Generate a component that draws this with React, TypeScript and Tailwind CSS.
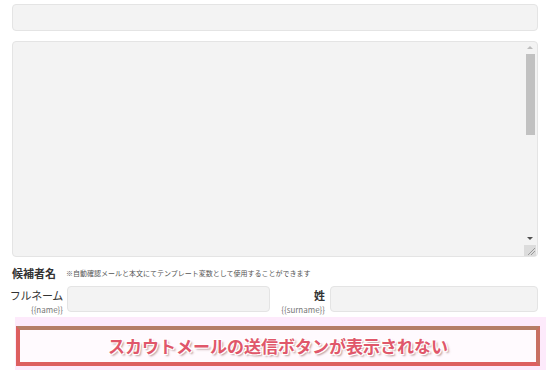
export default function App() {
  const font = { fontFamily: '"Noto Sans CJK JP", "Noto Sans", sans-serif' };
  return (
    <div className="w-[550px] h-[380px] bg-white overflow-hidden relative" style={font}>
      <div className="px-3 pt-1">
        <div className="h-[27px] rounded border border-[#e4e4e4] bg-[#f3f3f3]" />
        <div className="mt-[10px] h-[216px] rounded-sm border border-[#e4e4e4] bg-[#f3f3f3] flex justify-end">
          <div className="w-[12px] mr-[1px] flex flex-col items-center pt-[4px]">
            <div className="w-0 h-0 border-l-[3px] border-r-[3px] border-b-[3px] border-l-transparent border-r-transparent border-b-[#bdbdbd]" />
            <div className="mt-[5px] w-[9px] h-[81px] bg-[#c1c1c1]" />
            <div className="flex-1" />
            <div className="w-0 h-0 border-l-[3px] border-r-[3px] border-t-[3px] border-l-transparent border-r-transparent border-t-[#505050]" />
            <div className="mt-[5px] w-[12px] h-[11px] bg-[#dcdcdc] relative">
              <svg className="absolute inset-0" width="12" height="11" viewBox="0 0 12 11">
                <path d="M4 10 L11 3 M7 10 L11 6" stroke="#999" strokeWidth="1" />
              </svg>
            </div>
          </div>
        </div>
        <div className="mt-[8px] flex items-center gap-[10px]">
          <span className="text-[11px] font-bold text-[#333]">候補者名</span>
          <span className="text-[7px] text-[#555]">※自動確認メールと本文にてテンプレート変数として使用することができます</span>
        </div>
        <div className="mt-[4px] flex items-start">
          <div className="w-[51px] shrink-0 flex flex-col items-end pt-[2px]">
            <span className="text-[11px] leading-[14px] text-[#333] whitespace-nowrap tracking-[-0.3px]">フルネーム</span>
            <span className="text-[8px] leading-[12px] text-[#777] mt-[2px] whitespace-nowrap">{"{{name}}"}</span>
          </div>
          <div className="ml-[4px] w-[203px] shrink-0 h-[26px] rounded border border-[#e4e4e4] bg-[#f3f3f3]" />
          <div className="ml-[8px] w-[47px] shrink-0 flex flex-col items-end pt-[2px]">
            <span className="text-[11px] leading-[14px] text-[#333] font-bold">姓</span>
            <span className="text-[8px] leading-[12px] text-[#777] mt-[2px] whitespace-nowrap">{"{{surname}}"}</span>
          </div>
          <div className="ml-[5px] flex-1 h-[26px] rounded border border-[#e4e4e4] bg-[#f3f3f3]" />
        </div>
      </div>
      <div className="absolute left-[15px] w-[531px] top-[317px] h-[53px] bg-[#fdeafb] pl-[1px] pt-[9px]">
        <div className="w-[524px] h-[40px] border-[4px] border-[#dd5f5f] border-t-[#b57d66] border-r-[#c87062] bg-[#fffafe] flex items-center justify-center">
          <span
            className="text-[17px] font-bold text-[#e0576a]"
            style={{ textShadow: "1px 1px 0 #fff, -1px -1px 0 #fff, 1px -1px 0 #fff, -1px 1px 0 #fff, 2px 2px 2px rgba(120,60,60,0.5)" }}
          >
            スカウトメールの送信ボタンが表示されない
          </span>
        </div>
      </div>
    </div>
  );
}
